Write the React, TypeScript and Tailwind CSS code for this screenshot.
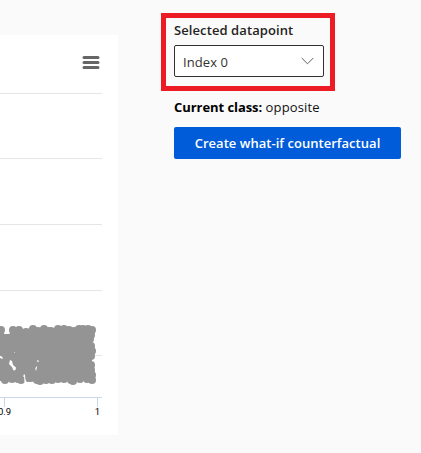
const gridLines = [93.5, 158.5, 224.5, 290.5, 355.5];

// Centres of the markers along the rim of the cluster.
const points: [number, number][] = [
  [1, 330], [0, 334], [13, 330], [18, 331], [19, 330], [26, 332], [33, 329], [31, 332],
  [38, 331], [44, 329], [49, 331], [51, 331], [58, 329], [64, 329], [69, 330], [74, 331],
  [79, 329], [83, 329], [88, 329], [92, 330], [91, 335], [90, 339], [88, 343], [91, 346],
  [92, 351], [91, 356], [88, 360], [91, 365], [91, 370], [92, 375], [92, 380], [87, 379],
  [80, 379], [73, 381], [71, 380], [64, 379], [58, 379], [52, 380], [46, 380], [40, 381],
  [37, 380], [31, 378], [28, 378], [21, 380], [18, 379], [12, 379], [5, 380], [1, 377],
];

function Chart() {
  return (
    <svg className="block h-[400px] w-[118px]" viewBox="0 35 118 400">
      {gridLines.map((y) => (
        <path key={y} d={`M0 ${y}H102`} stroke="#e6e6e6" />
      ))}
      <path d="M0 397.5H102M4.5 397V407M97.5 397V407" fill="none" stroke="#ccd6eb" />
      <g fill="#949494">
        <path d="M0 333L5 334H9L12 330L25 333L35 330L50 332L60 329H91L88 343L91 350L88 360L91 380H27L24 374L22 380H0Z" />
        {points.map(([x, y], i) => (
          <circle key={i} cx={x} cy={y} r="4" />
        ))}
      </g>
      <g fill="#fff">
        <path d="M5.5 325H8.7V331L9.5 334H5.5ZM0 356L2 356.5L3 359L0 358ZM10 360L12 361L13 365L16 367.5L15.5 370L13.5 370.5L12 367L9 364ZM24 375L25 374.5L25.3 379L26.5 382L24.5 382ZM35.3 369L36.3 366L37 367.5L36 371ZM36.7 361L38 360L39 361.5L38 362ZM14 352L15 352.5L14 353Z" />
      </g>
      <g fill="#666" stroke="#666" strokeLinecap="round" strokeWidth="3">
        <path d="M84 57.5H98M84 62.5H98M84 67.5H98" />
      </g>
      <g fill="#000" fontFamily="Roboto, Liberation Sans, sans-serif" fontSize="9.5" textAnchor="middle">
        <text x="4.5" y="415">0.9</text>
        <text x="97.5" y="415">1</text>
      </g>
    </svg>
  );
}

export default function App() {
  return (
    <div className="flex h-[453px] w-[421px] items-start overflow-hidden bg-[#fafafa] font-['Open_Sans','Noto_Sans',sans-serif] text-sm text-[#111]">
      <section className="mt-[35px] h-[400px] w-[118px] shrink-0 bg-white">
        <Chart />
      </section>
      <aside className="ml-[43px] mt-[13px] flex w-[240px] shrink-0 flex-col">
        <div className="h-[78px] w-[174px] border-5 border-[#ed1c24] pl-2 pt-[2px]">
          <div className="h-[25px] whitespace-nowrap text-[13px] font-semibold leading-5 tracking-[0.09px] text-[#252423]">Selected datapoint</div>
          <button className="flex h-8 w-[150px] items-center justify-between rounded-xs border border-[#323130] bg-white pl-2 pr-[9px] text-[13px] tracking-[0.08px] text-[#323130]">
            <span className="pt-[2px]">Index 0</span>
            <svg className="h-[8px] w-[13px]" viewBox="0 0 13 8" fill="none" stroke="#605e5c">
              <path d="M.7 1L6.5 6.8L12.3 1" />
            </svg>
          </button>
        </div>
        <div className="ml-[13px] mt-[6px] h-[30px] whitespace-nowrap text-[13px] leading-5">
          <b className="tracking-[-0.06px] text-black">Current class:</b> <span className="tracking-[0.15px]">opposite</span>
        </div>
        <button className="ml-[13px] h-8 w-[227px] whitespace-nowrap rounded-xs bg-[#015cda] text-[13px] font-semibold tracking-[0.03px] text-white">
          Create what-if counterfactual
        </button>
      </aside>
    </div>
  );
}
